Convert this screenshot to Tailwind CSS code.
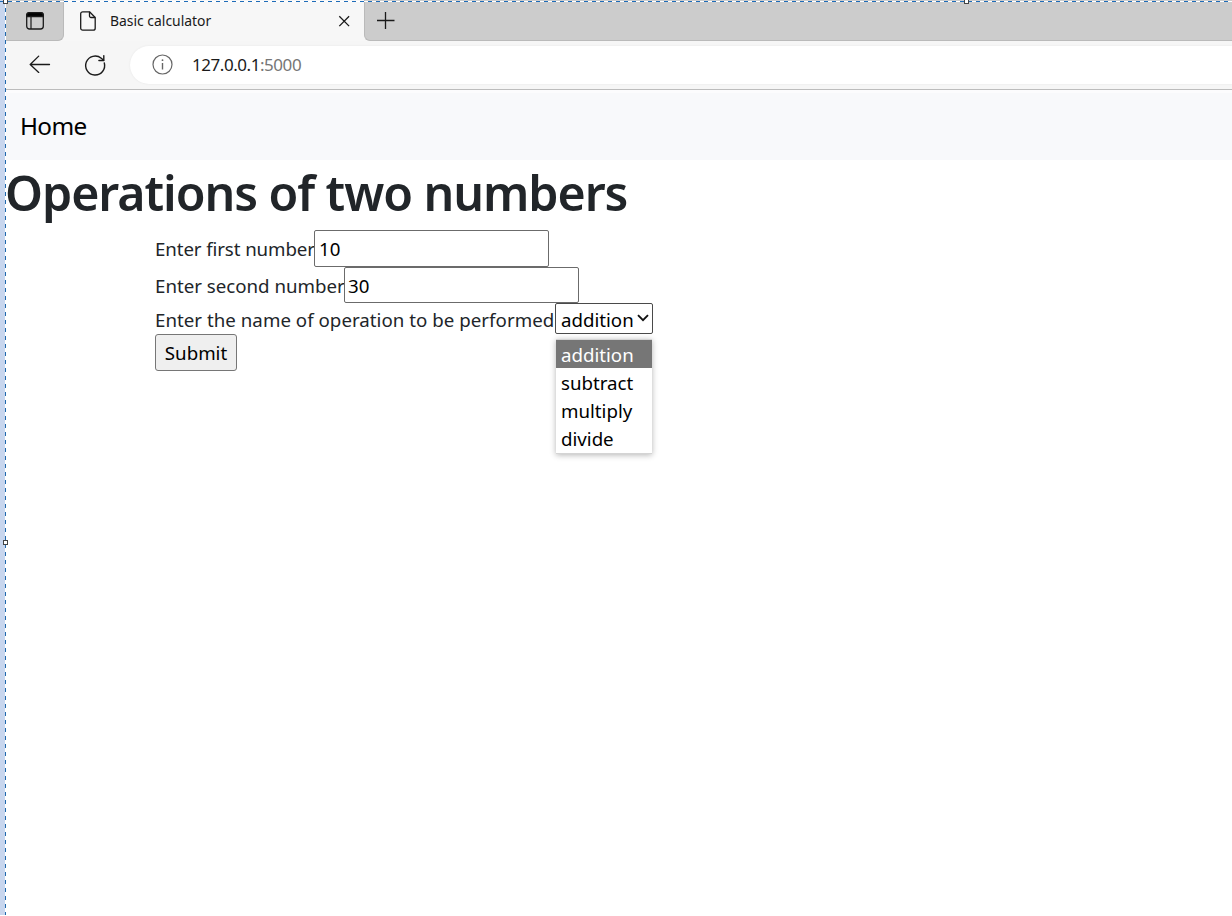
<!DOCTYPE html>
<html lang="en">
<head>
<meta charset="utf-8">
<title>Basic calculator</title>
<script src="https://cdn.jsdelivr.net/npm/@tailwindcss/browser@4"></script>
</head>
<body class="h-[916px] overflow-hidden bg-white font-['Noto_Sans','Open_Sans',sans-serif] text-[#212529]">
<div class="relative flex h-[916px] w-[1232px] overflow-hidden">
  <div class="h-[915px] w-[5px] shrink-0 bg-[#c8d6ee]"></div>
  <div class="flex min-w-0 flex-1 flex-col">

    <!-- Tab strip -->
    <div class="flex h-[41px] bg-[#f7f7f7]">
      <div class="flex w-[59px] items-center rounded-br-md border-r border-b border-[#bababa] bg-[#cccccc] pl-5">
        <svg class="size-5" viewBox="0 0 20 20" fill="none" stroke="#1a1a1a" stroke-width="1.3"><rect x="1.7" y="2.7" width="16.6" height="16.300" rx="2.8"/><path d="M1.7 6.500V5.500a2.8 2.8 0 0 1 2.8-2.800h11a2.8 2.8 0 0 1 2.8 2.800v1z" fill="#000"/><path d="M6 7v12" stroke-width="1.2"/></svg>
      </div>
      <div class="flex w-[300px] items-center pl-4">
        <svg class="h-5 w-4" viewBox="0 0 16 20" fill="none" stroke="#1a1a1a" stroke-width="1.3" stroke-linejoin="round"><path d="M2.7.8H9.5L15.2 6.5V17.2a2 2 0 0 1-2 2H2.7a2 2 0 0 1-2-2V2.8a2 2 0 0 1 2-2z"/><path d="M9.5.8V5A1.5 1.5 0 0 0 11 6.5h4.2"/></svg>
        <span class="mt-px ml-[14px] whitespace-nowrap pt-px text-[13.9px] text-[#1a1a1a]">Basic calculator</span>
        <svg class="mt-px mr-[14px] ml-auto size-3" viewBox="0 0 12 12" fill="none" stroke="#1a1a1a" stroke-width="1.3"><path d="M1.300 1.300l9.800 9.800M11.100 1.300l-9.800 9.800"/></svg>
      </div>
      <div class="flex flex-1 items-center rounded-bl-md border-b border-l border-[#bababa] bg-[#cccccc] pl-3">
        <svg class="size-[18px]" viewBox="0 0 18 18" fill="none" stroke="#1a1a1a" stroke-width="1.3"><path d="M0 9.500h17.500M8.500 1v17"/></svg>
      </div>
    </div>

    <!-- Address bar -->
    <div class="flex h-[49px] items-center border-b border-[#bcbcbc] bg-[#f6f6f6]">
      <svg class="mb-[2px] ml-6 h-[18px] w-[22px]" viewBox="0 0 22 18" fill="none" stroke="#1a1a1a" stroke-width="1.3" stroke-linecap="round" stroke-linejoin="round"><path d="M20.5 9.500H1.2M9.7 1.100L1.2 9.500l8.500 8"/></svg>
      <svg class="mb-px ml-8 size-[24px]" viewBox="0 0 24 24" fill="none" stroke="#1a1a1a" stroke-width="1.4" stroke-linecap="round" stroke-linejoin="round"><path d="M21.300 10A9.500 9.500 0 1 1 18.300 5.300L20.600 7.300"/><path d="M20.800 2.600v4.900h-4.900"/></svg>
      <div class="ml-[23px] flex h-[38px] flex-1 items-center rounded-l-full bg-white pl-[22px] shadow-[0_0_2px_#e4e4e4]">
        <svg class="mb-px size-[21px]" viewBox="0 0 21 21" fill="none" stroke="#666" stroke-width="1.2"><circle cx="10.5" cy="10.5" r="9.5"/><path d="M10.5 9v6.5" stroke-width="1.4"/><circle cx="10.5" cy="6.2" r=".9" fill="#666" stroke="none"/></svg>
        <span class="ml-[19px] text-[17px] tracking-[-0.45px] text-[#1a1a1a]">127.0.0.1<span class="text-[#767676]">:5000</span></span>
      </div>
    </div>

    <!-- Page -->
    <nav class="flex h-[70px] items-center border-t-[3px] border-[#fcfcfd] bg-[#f8f9fb] pl-[15px]">
      <span class="text-[24.3px] tracking-[-0.65px] text-black">Home</span>
    </nav>
    <h1 class="h-[70px] whitespace-nowrap text-[48.3px] leading-[65px] font-semibold tracking-[-1.05px]">Operations of two numbers</h1>
    <form class="flex flex-col items-start pl-[150px] text-[18.7px] leading-7">
      <div class="flex h-[37px] items-center">
        <label for="first" class="w-[159px] whitespace-nowrap tracking-[-0.1px]">Enter first number</label>
        <input id="first" value="10" class="h-[37px] w-[235px] rounded-[2px] border border-[#6b6b6b] bg-white px-1 text-black">
      </div>
      <div class="flex h-9 items-center">
        <label for="second" class="w-[189px] whitespace-nowrap pt-[2px]">Enter second number</label>
        <input id="second" value="30" class="h-9 w-[235px] rounded-[2px] border border-[#6b6b6b] bg-white px-[3px] text-black">
      </div>
      <div class="flex h-[31px] items-center">
        <span class="w-[400px] whitespace-nowrap pt-[2px] tracking-[0.03px]">Enter the name of operation to be performed</span>
        <div class="relative flex h-[31px] w-[98px] items-center justify-between rounded-[2px] border border-[#4a4a4a] bg-white pr-[3px] pl-[5px] text-black">
          <span class="pt-[2px]">addition</span>
          <svg class="mb-px h-[8px] w-[12px] shrink-0" viewBox="0 0 12 8" fill="none" stroke="#111" stroke-width="1.9"><path d="M1 1.2l5 5 5-5"/></svg>
          <ul class="absolute top-[35px] left-0 w-[96px] border-t border-b border-[#d4d4d4] bg-white pb-px shadow-[0_1px_6px_rgba(0,0,0,0.3)]">
            <li class="h-7 bg-[#767676] pl-[5px] leading-[29px] text-white">addition</li>
            <li class="h-7 pl-[5px] leading-[29px]">subtract</li>
            <li class="h-7 pl-[5px] leading-[29px]">multiply</li>
            <li class="h-7 pl-[5px] leading-[29px]">divide</li>
          </ul>
        </div>
      </div>
      <button type="button" class="h-[37px] w-[82px] rounded-[3px] border border-[#767676] bg-[#efefef] text-black">Submit</button>
    </form>
  </div>

  <!-- Selection frame: dashed edges and resize handles -->
  <div class="absolute top-0 left-[5px] h-[915px] w-px bg-[repeating-linear-gradient(to_bottom,#2068ac_0px,#2068ac_4px,#ffffff_4px,#ffffff_8px)]"></div>
  <div class="absolute top-px left-0 h-px w-full bg-[repeating-linear-gradient(to_right,#1f6cb8_0px,#1f6cb8_4px,#ffffff_4px,#ffffff_8px)]"></div>
  <div class="absolute -top-px left-[3px] size-[5px] border border-[#444] bg-white"></div>
  <div class="absolute -top-px left-[964px] size-[5px] border border-[#444] bg-white"></div>
  <div class="absolute top-[540px] left-[3px] size-[5px] border border-[#444] bg-white"></div>
</div>
</body>
</html>
